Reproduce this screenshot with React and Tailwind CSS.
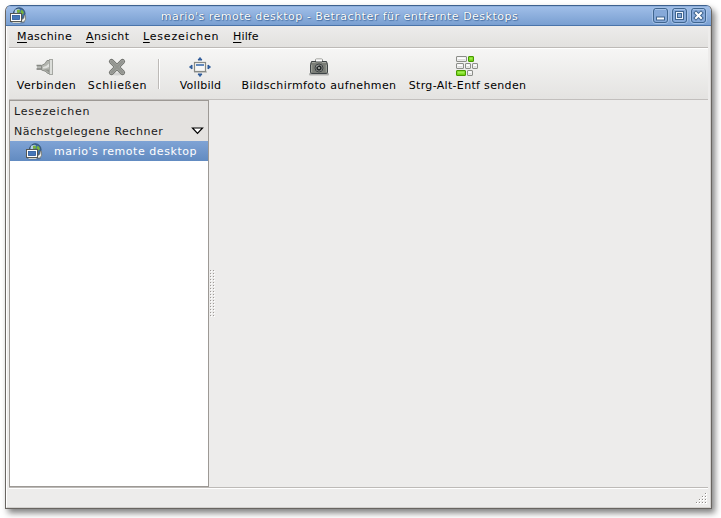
import React from "react";

function DesktopIcon({ className }) {
  return (
    <svg className={className} width="17" height="17" viewBox="0 0 17 17">
      <ellipse cx="8" cy="15.5" rx="7" ry="1.3" fill="#000" opacity=".15" />
      <circle cx="9.2" cy="6.6" r="5.8" fill="#3b6ba8" stroke="#34506b" />
      <path d="M5 2.8l4-1 1 1.2-2 1-1 2H4.500z" fill="#b9cfe2" />
      <path d="M7 3l2-.5 1.500 1.500-1.500 2-2-.5zM11 3l2 .5 1 2.500-2 2-1.500-2z" fill="#79b33c" />
      <path d="M12 12.500q2.500-.5 2.200-4.500l1.300.5q1 4.500-1.600 6.500h-2.400v-1.600" fill="#eceeea" stroke="#6c6f69" strokeWidth=".8" />
      <rect x=".5" y="6.500" width="11" height="8" fill="#4677b8" stroke="#555753" />
      <rect x="1.800" y="7.800" width="8.400" height="5.400" fill="#5f8ac4" stroke="#fff" strokeWidth="1.600" />
      <rect x="2.500" y="8.500" width="7" height="4" fill="#4677b8" stroke="#2f5d9c" strokeWidth=".8" />
      <path d="M2.500 15.500h8" stroke="#d3d7cf" />
    </svg>
  );
}

function PlugIcon() {
  return (
    <svg width="20" height="20" viewBox="0 0 20 20">
      <rect x="1" y="8" width="5" height="5" fill="#b9bbb7" />
      <path d="M.5 8.5h5M.5 12h5" stroke="#858782" strokeWidth="1.5" />
      <path d="M5.500 8.500q4-1 5.500-5h3v13h-2q-2.500-3-6.500-3.500z" fill="#b4b6b0" stroke="#8a8c87" />
      <path d="M7 10q3.500-.5 6-3.500V10q-3 1.500-6 1.500z" fill="#dfe0dd" />
      <path d="M8 12.500h5.500V16q-2-2.500-5.500-3.500z" fill="#8f918b" />
      <rect x="13.500" y="2.500" width="3" height="15" fill="#dcdeda" stroke="#a5a7a2" />
    </svg>
  );
}

function CrossIcon() {
  return (
    <svg width="20" height="20" viewBox="0 0 20 20">
      <ellipse cx="10" cy="17" rx="8" ry="1.5" fill="#000" opacity=".1" />
      <path d="M4.5 4.5l11 11M15.5 4.5l-11 11" stroke="#6c6e69" strokeWidth="5.2" strokeLinecap="round" />
      <path d="M4.5 4.5l11 11M15.5 4.5l-11 11" stroke="#a8a9a5" strokeWidth="3.4" strokeLinecap="round" />
      <path d="M4.5 4.5l11 11M15.5 4.5l-11 11" stroke="#92948f" strokeWidth="2" strokeLinecap="round" />
    </svg>
  );
}

function FullscreenIcon() {
  return (
    <svg width="24" height="22" viewBox="0 0 24 22">
      <rect x="6" y="15" width="13" height="2" fill="#000" opacity=".15" />
      <path d="M12 1.5l2 2.5h-4zM12 20.5l2-2.5h-4zM1.5 11L4 9v4zM22.5 11L20 9v4z" fill="#3465a4" stroke="#2c5896" />
      <rect x="6.5" y="6.5" width="11" height="9" fill="#f7f7f6" stroke="#888a85" strokeWidth="1.2" />
      <path d="M8 9h8" stroke="#6289bd" strokeWidth="2" />
    </svg>
  );
}

function CameraIcon() {
  return (
    <svg width="20" height="20" viewBox="0 0 20 20">
      <rect x="0" y="16" width="20" height="2.5" rx="1" fill="#000" opacity=".25" />
      <path d="M6.5 5V3q0-1 1-1h5q1 0 1 1v2" fill="#eeeeec" stroke="#8a8c87" />
      <path d="M2.5 4.5h15l1 3v8q0 1-1 1h-15q-1 0-1-1v-8z" fill="#7a7d77" stroke="#3e4446" />
      <path d="M3 5.5h3.5M13 5.5h4M2.7 8v7M17.3 8v7" stroke="#a6a9a1" />
      <path d="M7 3.5h6" stroke="#fff" strokeWidth="2" />
      <circle cx="10" cy="11" r="4" fill="#a0a29d" stroke="#3e4446" />
      <circle cx="10" cy="11" r="2.7" fill="#252a2b" />
      <circle cx="10" cy="11" r="1" fill="#b9bdb6" />
      <path d="M8 9.5l1-1" stroke="#eee" />
    </svg>
  );
}

const KEYS = [
  [0, 0, 10, false], [12, 0, 5, true],
  [0, 7, 7, false], [9, 7, 5, false], [16, 7, 5, false],
  [0, 14, 9, true], [11, 14, 5, false],
];

function KeysIcon() {
  return (
    <svg width="24" height="22" viewBox="0 0 24 22">
      {KEYS.map(([x, y, w, on]) => (
        <g key={`${x}-${y}`}>
          <rect x={x + 0.5} y={y + 0.5} width={w} height="5" rx=".5" fill={on ? "#73d216" : "#e9e9e8"} stroke={on ? "#479800" : "#8c8e89"} />
          <rect x={x + 1.5} y={y + 1.5} width={w - 2} height="2" fill={on ? "#a0ee50" : "#fff"} />
          <path d={`M${x + 2} ${y + 3.5}h${w - 3}`} stroke={on ? "#8ae234" : "#dddedb"} />
        </g>
      ))}
    </svg>
  );
}

function WindowButton({ children }) {
  return (
    <svg width="17" height="17" viewBox="0 0 17 17">
      <rect x=".5" y=".5" width="16" height="16" rx="3.5" fill="none" stroke="#a6c2e7" />
      <rect x="1.5" y="1.5" width="14" height="14" rx="2.5" fill="#86a9d9" stroke="#3f658f" />
      <path d="M3 2.5h11" stroke="#a6c3e9" />
      {children}
    </svg>
  );
}

function ToolButton({ width, icon, iconSpace = "pt-0", tracking, children }) {
  return (
    <div className={`flex h-full shrink-0 flex-col items-center ${width}`}>
      <div className={`mt-[7px] flex h-[23px] items-start justify-center ${iconSpace}`}>{icon}</div>
      <span className={`leading-[14px] ${tracking}`}>{children}</span>
    </div>
  );
}

function MenuItem({ width, tracking, children }) {
  return (
    <span className={`shrink-0 ${tracking} ${width}`}>
      <span className="underline underline-offset-2">{children[0]}</span>
      {children.slice(1)}
    </span>
  );
}

const GRIP = [[9, 0], [6, 3], [9, 3], [3, 6], [6, 6], [9, 6], [0, 9], [3, 9], [6, 9], [9, 9]];
const HANDLE_ROWS = Array.from({ length: 16 }, (_, i) => i * 3);

export default function App() {
  return (
    <div className="h-[518px] w-[721px] overflow-hidden bg-white pl-[5px] pt-[5px] font-['DejaVu_Sans',sans-serif] text-[11px] whitespace-nowrap text-black">
      <div className="flex h-[504px] w-[707px] flex-col overflow-hidden rounded-t-[6px] border border-[#696561] border-t-[#3d618f] bg-[#edeceb] shadow-[3px_4px_6px_rgba(0,0,0,0.5)]">
        <header className="flex h-[20px] shrink-0 items-center border-b border-[#4a74aa] bg-linear-to-b from-[#a1bfe9] to-[#799fd1] shadow-[inset_0_1px_0_#8fb0dc]">
          <DesktopIcon className="ml-[4px] shrink-0" />
          <h1 className="flex-1 pt-px text-center leading-[19px] tracking-[0.5px] text-white [text-shadow:0_0_1px_#305784,1px_1px_1px_#4a73a8]">
            mario's remote desktop - Betrachter für entfernte Desktops
          </h1>
          <div className="mr-[4px] flex gap-[2px]">
            <WindowButton><path d="M4 11.5h9" stroke="#3f658f" strokeWidth="4" /><path d="M5 11.5h7" stroke="#fff" strokeWidth="2" /></WindowButton>
            <WindowButton><rect x="5.5" y="5.5" width="6" height="6" fill="none" stroke="#3f658f" strokeWidth="3" /><rect x="5.5" y="5.5" width="6" height="6" fill="#86a9d9" stroke="#f0f5fc" strokeWidth="1" /><rect x="6.5" y="6.5" width="4" height="4" fill="#86a9d9" stroke="#3f658f" /></WindowButton>
            <WindowButton><path d="M6 6l5 5m0-5l-5 5" stroke="#3f658f" strokeWidth="4" strokeLinecap="square" /><path d="M6 6l5 5m0-5l-5 5" stroke="#fff" strokeWidth="2" strokeLinecap="square" /></WindowButton>
          </div>
        </header>
        <div className="flex min-h-0 flex-1 flex-col border-r border-b border-l border-r-[#d3d1cf] border-b-[#d3d1cf] border-l-white px-[2px]">
          <nav className="flex h-[22px] shrink-0 items-center border-b border-[#bdbab7] bg-linear-to-b from-[#edeceb] to-[#e2e1df] pt-[2px] pl-[8px]">
            <MenuItem width="w-[69px]" tracking="tracking-[0.42px]">Maschine</MenuItem>
            <MenuItem width="w-[57px]" tracking="tracking-[0.4px]">Ansicht</MenuItem>
            <MenuItem width="w-[90px]" tracking="tracking-[0.8px]">Lesezeichen</MenuItem>
            <MenuItem width="w-[40px]" tracking="tracking-[0.15px]">Hilfe</MenuItem>
          </nav>
          <div className="flex h-[52px] shrink-0 border-t border-b border-t-white border-b-[#c2bfbd] bg-linear-to-b from-[#f6f6f5] to-[#e4e3e1] pl-[2px]">
            <ToolButton width="w-[71px]" tracking="tracking-[0.4px]" iconSpace="pt-px pr-px" icon={<PlugIcon />}>Verbinden</ToolButton>
            <ToolButton width="w-[71px]" tracking="tracking-[0.65px]" iconSpace="pt-px pr-px" icon={<CrossIcon />}>Schließen</ToolButton>
            <div className="mt-[10px] mr-[6px] ml-[5px] h-[30px] w-[2px] border-r border-l border-r-white border-l-[#bdbab7]" />
            <ToolButton width="w-[69px]" tracking="tracking-[0.25px]" iconSpace="pr-px" icon={<FullscreenIcon />}>Vollbild</ToolButton>
            <ToolButton width="w-[168px]" tracking="tracking-[0.4px]" iconSpace="pt-px" icon={<CameraIcon />}>Bildschirmfoto aufnehmen</ToolButton>
            <ToolButton width="w-[129px]" tracking="tracking-[0.33px]" icon={<KeysIcon />}>Strg-Alt-Entf senden</ToolButton>
          </div>
          <main className="flex min-h-0 flex-1">
            <aside className="flex w-[200px] shrink-0 flex-col border border-[#9d9995] bg-white text-[#1a1a1a]">
              <div className="h-[20px] bg-[#e4e2e0] pt-px pl-[4px] leading-[20px] tracking-[0.8px]">Lesezeichen</div>
              <div className="flex h-[20px] items-center justify-between bg-[#e4e2e0] pr-[4px] pl-[4px] tracking-[0.52px]">
                <span className="pt-[2px]">Nächstgelegene Rechner</span>
                <svg width="13" height="8" viewBox="0 0 13 8"><path d="M1.5 1h10L6.5 6.3z" fill="#fff" stroke="#000" strokeWidth="1.2" /></svg>
              </div>
              <div className="flex h-[20px] items-center bg-linear-to-b from-[#7fa3d5] to-[#628bc1] pl-[16px] text-white">
                <DesktopIcon className="mr-[11px] shrink-0" />
                <span className="pt-[2px] tracking-[0.55px]">mario's remote desktop</span>
              </div>
            </aside>
            <div className="flex w-[8px] items-center">
              <svg width="6" height="48" viewBox="0 0 6 48" shapeRendering="crispEdges">
                {HANDLE_ROWS.map((y) => (
                  <g key={y}>
                    <path d={`M2 ${y + 1.5}h1M5 ${y + 1.5}h1`} stroke="#fff" />
                    <path d={`M1 ${y + 0.5}h1M4 ${y + 0.5}h1`} stroke="#9e9a97" />
                  </g>
                ))}
              </svg>
            </div>
          </main>
          <footer className="flex h-[20px] shrink-0 items-end justify-end border-t border-[#bdbab7] pr-px pb-[3px] shadow-[inset_0_1px_0_#fff]">
            <svg width="11" height="11" viewBox="0 0 11 11" shapeRendering="crispEdges">
              {GRIP.map(([x, y]) => (
                <g key={`${x}-${y}`}>
                  <rect x={x} y={y} width="2" height="2" fill="#fff" />
                  <rect x={x} y={y} width="1" height="1" fill="#8e8a87" />
                </g>
              ))}
            </svg>
          </footer>
        </div>
      </div>
    </div>
  );
}
